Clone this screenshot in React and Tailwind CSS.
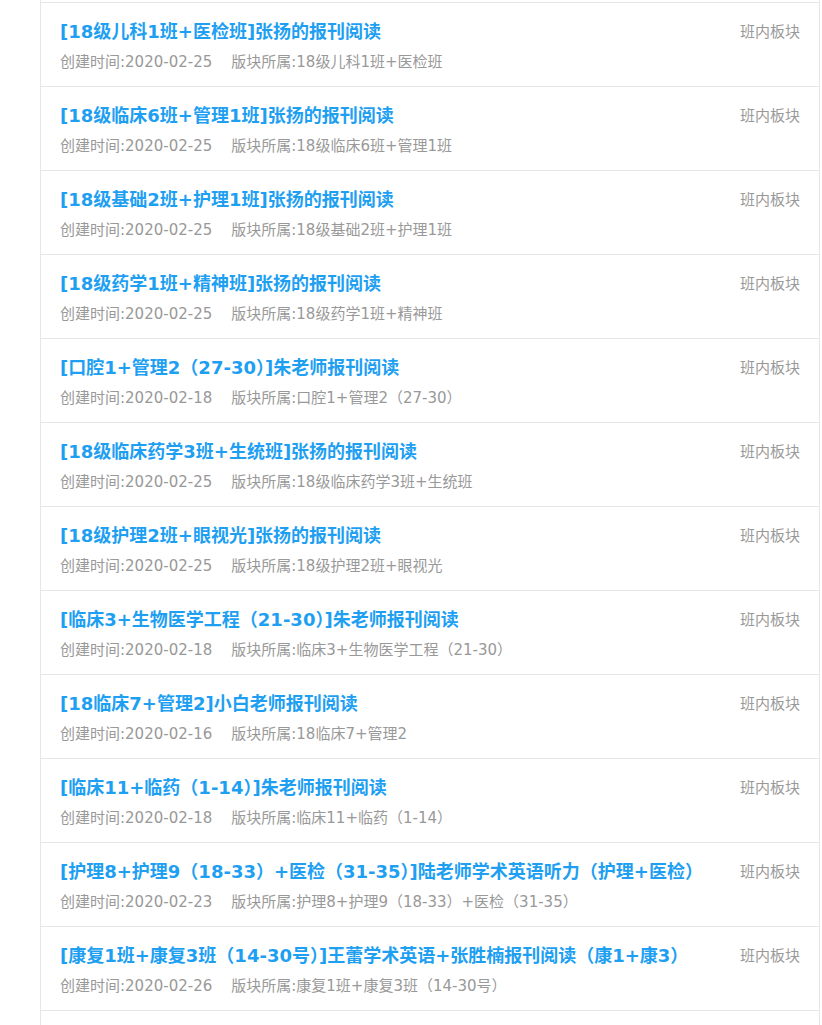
import React from 'react';

const posts = [
  { title: '[18级儿科1班+医检班]张扬的报刊阅读', date: '2020-02-25', board: '18级儿科1班+医检班' },
  { title: '[18级临床6班+管理1班]张扬的报刊阅读', date: '2020-02-25', board: '18级临床6班+管理1班' },
  { title: '[18级基础2班+护理1班]张扬的报刊阅读', date: '2020-02-25', board: '18级基础2班+护理1班' },
  { title: '[18级药学1班+精神班]张扬的报刊阅读', date: '2020-02-25', board: '18级药学1班+精神班' },
  { title: '[口腔1+管理2（27-30）]朱老师报刊阅读', date: '2020-02-18', board: '口腔1+管理2（27-30）' },
  { title: '[18级临床药学3班+生统班]张扬的报刊阅读', date: '2020-02-25', board: '18级临床药学3班+生统班' },
  { title: '[18级护理2班+眼视光]张扬的报刊阅读', date: '2020-02-25', board: '18级护理2班+眼视光' },
  { title: '[临床3+生物医学工程（21-30）]朱老师报刊阅读', date: '2020-02-18', board: '临床3+生物医学工程（21-30）' },
  { title: '[18临床7+管理2]小白老师报刊阅读', date: '2020-02-16', board: '18临床7+管理2' },
  { title: '[临床11+临药（1-14）]朱老师报刊阅读', date: '2020-02-18', board: '临床11+临药（1-14）' },
  { title: '[护理8+护理9（18-33）+医检（31-35）]陆老师学术英语听力（护理+医检）', date: '2020-02-23', board: '护理8+护理9（18-33）+医检（31-35）' },
  { title: '[康复1班+康复3班（14-30号）]王蕾学术英语+张胜楠报刊阅读（康1+康3）', date: '2020-02-26', board: '康复1班+康复3班（14-30号）' },
];

const PostItem = ({ post }) => (
  <div className="h-[84px] border-b border-[#e6e6e6] pl-[19px] pr-[19px] pt-[16px]">
    <div className="flex items-center justify-between h-[26px]">
      <a className="text-[18px] font-bold text-[#1e9ff2] leading-[26px] truncate">{post.title}</a>
      <span className="text-[15px] text-[#999] shrink-0 ml-4">班内板块</span>
    </div>
    <div className="mt-[7px] text-[15px] text-[#999] leading-[20px] flex">
      <span className="mr-[19px]">创建时间:{post.date}</span>
      <span>版块所属:{post.board}</span>
    </div>
  </div>
);

export default function App() {
  return (
    <div className="bg-white min-h-[1025px]" style={{ fontFamily: '"DejaVu Sans", "Noto Sans CJK SC", sans-serif' }}>
      <div className="ml-[40px] w-[780px] min-h-[1025px] border-l border-r border-[#e6e6e6] bg-white">
        <div className="h-[3px] border-b border-[#e6e6e6]" />
        {posts.map((post, idx) => (
          <PostItem key={idx} post={post} />
        ))}
      </div>
    </div>
  );
}
